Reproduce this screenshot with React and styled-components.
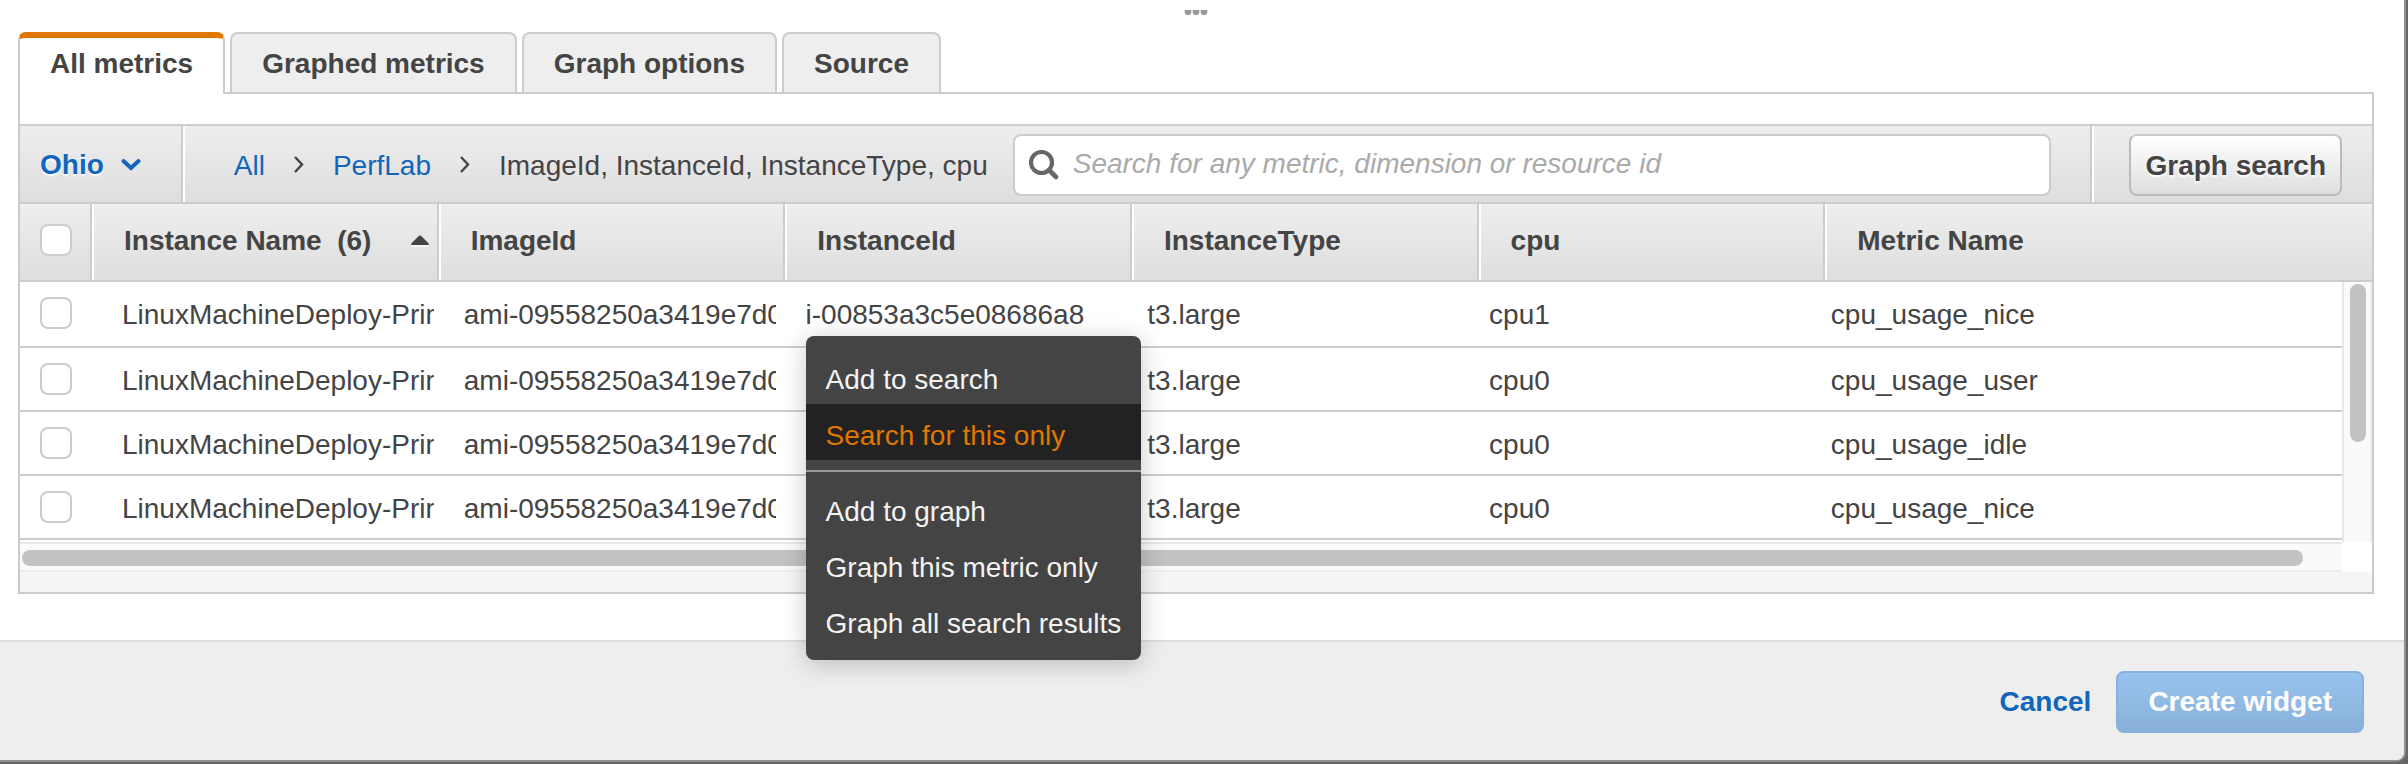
import React from "react";
import styled, { createGlobalStyle, css } from "styled-components";

const GlobalStyle = createGlobalStyle`
  * { box-sizing: border-box; }
  body {
    margin: 0;
    background: #6b6b6b;
    color: #444;
    font: 28px/32px "Liberation Sans", Arial, Helvetica, sans-serif;
  }
  button, input { font: inherit; color: inherit; }
`;

const raised = css`
  background: linear-gradient(#eeeeee, #dedede);
`;

const Backdrop = styled.div`
  padding: 0 4px 4px 0;
  background: #666;
`;

const Dialog = styled.div`
  display: flex;
  flex-direction: column;
  background: #fff;
  border-radius: 0 0 8px 0;
  box-shadow: 0 0 0 2px #909090;
`;

const DragHandle = styled.div`
  display: flex;
  justify-content: center;
  height: 32px;
  padding: 10px 12px 0 0;
`;

const Content = styled.main`
  padding: 0 30px 46px 18px;
`;

const TabBar = styled.div`
  display: flex;
  gap: 5px;
  padding-right: 2px;
`;

const Tab = styled.button`
  height: 60px;
  padding: 2px 30px 0;
  border: 2px solid #ccc;
  border-bottom: 0;
  border-radius: 8px 8px 0 0;
  background: #eee;
  font-weight: bold;
  ${(p) =>
    p.$active &&
    css`
      height: 62px;
      margin-bottom: -2px;
      padding-bottom: 4px;
      padding-top: 0;
      border-top: 6px solid #e07700;
      background: #fff;
      position: relative;
    `}
`;

const Panel = styled.section`
  padding-top: 30px;
  border: 2px solid #ccc;
`;

const Toolbar = styled.div`
  ${raised}
  display: flex;
  align-items: stretch;
  height: 80px;
  border: solid #ccc;
  border-width: 2px 0;
`;

const Region = styled.button`
  display: flex;
  align-items: center;
  gap: 17px;
  padding: 2px 40px 0 20px;
  border: 0;
  border-right: 2px solid #ccc;
  background: none;
  color: #1166bb;
  font-weight: bold;
  text-shadow: 0 2px 2px #fff;
`;

const Finder = styled.div`
  flex: 1;
  display: flex;
  align-items: center;
  gap: 25px;
  padding: 2px 39px 0 49px;
  border-left: 2px solid #fff;
`;

const Crumbs = styled.nav`
  display: flex;
  align-items: center;
  gap: 29px;
  padding-top: 2px;
  white-space: nowrap;
`;

const Crumb = styled.a`
  color: #1166bb;
  text-decoration: none;
`;

const SearchBox = styled.label`
  flex: 1;
  display: flex;
  align-items: center;
  gap: 14px;
  height: 62px;
  padding: 0 14px;
  border: 2px solid #ccc;
  border-radius: 8px;
  background: #fff;
`;

const SearchInput = styled.input`
  flex: 1;
  min-width: 0;
  padding: 0 0 2px;
  border: 0;
  outline: 0;
  background: none;
  &::placeholder { color: #aaa; opacity: 1; font-style: italic; }
`;

const SearchAction = styled.div`
  display: flex;
  align-items: center;
  padding: 2px 30px 0 37px;
  border-left: 2px solid #ccc;
  box-shadow: inset 2px 0 #fff;
`;

const GraphSearch = styled.button`
  height: 62px;
  padding: 2px 14px 0;
  border: 2px solid #bbb;
  border-top-color: #ccc;
  border-radius: 8px;
  background: linear-gradient(#fff, #dedede);
  font-weight: bold;
  text-shadow: 0 2px 2px #fff;
`;

const Table = styled.table`
  display: block;
  thead, tbody { display: block; }
`;

const HeadRow = styled.tr`
  ${raised}
  display: grid;
  grid-template-columns: 74px repeat(5, 7fr) 11fr;
  height: 78px;
  border-bottom: 2px solid #ccc;
`;

const HeadCell = styled.th`
  display: flex;
  align-items: center;
  justify-content: space-between;
  min-width: 0;
  padding: 0 12px 2px 30px;
  text-align: left;
  white-space: pre;
  box-shadow: inset -2px 0 #fff, inset -4px 0 #ccc;
  &:last-child { box-shadow: none; }
`;

const HeadCheck = styled.th`
  padding: 20px 20px 0;
  text-align: left;
  line-height: 0;
  box-shadow: inset -2px 0 #fff, inset -4px 0 #ccc;
`;

const Checkbox = styled.input.attrs({ type: "checkbox" })`
  appearance: none;
  width: 32px;
  height: 32px;
  margin: 0;
  border: 2px solid #ccc;
  border-radius: 8px;
  background: #fff;
`;

const Scroller = styled.div`
  display: grid;
  grid-template-columns: 1fr 30px;
  grid-template-rows: auto 30px;
`;

const Rows = styled(Table)`
  padding-bottom: 2px;
`;

const Row = styled.tr`
  display: grid;
  grid-template-columns: 72px repeat(5, 12fr) 19fr;
  height: 64px;
  border-bottom: 2px solid #ccc;
  &:first-child { height: 66px; }
`;

const CheckCell = styled.td`
  padding: 15px 20px 0;
  line-height: 0;
`;

const Cell = styled.td`
  position: relative;
  min-width: 0;
  padding: 17px 0 0 30px;
`;

const Value = styled.div`
  overflow: hidden;
  white-space: nowrap;
`;

const VerticalTrack = styled.div`
  padding: 2px 4px 0 6px;
  border: solid #eee;
  border-width: 0 2px;
  border-left-color: #e8e8e8;
  background: #fafafa;
`;

const VerticalThumb = styled.div`
  height: 158px;
  border-radius: 8px;
  background: #c2c2c2;
`;

const HorizontalTrack = styled.div`
  padding: 6px 0 4px 2px;
  border: solid #eee;
  border-width: 2px 0;
  border-top-color: #e8e8e8;
  background: #fafafa;
`;

const HorizontalThumb = styled.div`
  width: calc(100% - 39px);
  height: 16px;
  border-radius: 8px;
  background: #c2c2c2;
`;

const PanelFoot = styled.div`
  height: 20px;
  background: #f5f5f5;
`;

const Menu = styled.div`
  position: absolute;
  z-index: 2;
  top: 54px;
  left: 30px;
  padding: 12px 0;
  border-radius: 8px;
  background: #444;
  box-shadow: 0 4px 24px rgba(0, 0, 0, 0.22);
  white-space: nowrap;
`;

const MenuItem = styled.button`
  display: block;
  width: 100%;
  height: 56px;
  padding: 8px 20px 0;
  border: 0;
  background: ${(p) => (p.$active ? "#222" : "none")};
  color: ${(p) => (p.$active ? "#e07700" : "#f3f3f3")};
  text-align: left;
`;

const MenuRule = styled.hr`
  height: 2px;
  margin: 10px 0 8px;
  border: 0;
  background: #999;
`;

const Footer = styled.footer`
  display: flex;
  justify-content: flex-end;
  align-items: center;
  gap: 25px;
  height: 120px;
  padding: 2px 40px 0 0;
  border-top: 2px solid #ddd;
  border-radius: 0 0 8px 0;
  background: #eee;
  font-weight: bold;
`;

const Cancel = styled.button`
  padding: 0;
  border: 0;
  background: none;
  color: #1166bb;
  font-weight: bold;
`;

const Create = styled.button`
  height: 62px;
  padding: 0 30px;
  border: 2px solid #88b1de;
  border-radius: 8px;
  background: linear-gradient(#99c3ee, #88b0db);
  color: #fff;
  font-weight: bold;
`;

const ChevronDown = () => (
  <svg width="20" height="14" viewBox="0 0 20 14" fill="none" stroke="#1166bb" strokeWidth="4" strokeLinecap="round" aria-hidden="true">
    <path d="M2.5 3 10 10 17.5 3" />
  </svg>
);

const ChevronRight = () => (
  <svg width="10" height="20" viewBox="0 0 10 20" fill="none" stroke="#444" strokeWidth="2.4" aria-hidden="true">
    <path d="M1 1 8 8.500 1 16" />
  </svg>
);

const SearchIcon = () => (
  <svg width="30" height="30" viewBox="0 0 30 30" fill="none" stroke="#666" aria-hidden="true">
    <circle cx="12.5" cy="12.5" r="10.5" strokeWidth="4.2" />
    <path d="M20 20 27 27" strokeWidth="4.6" strokeLinecap="round" />
  </svg>
);

const SortUp = () => (
  <svg width="18" height="12" viewBox="0 0 18 12" aria-hidden="true">
    <path d="M0 12V10H18V12Z" fill="#f6f6f6" />
    <path d="M.5 10Q-.5 9 .8 8L8 .8Q9 0 10 .8L17.200 8Q18.500 9 17.500 10Z" fill="#444" />
  </svg>
);

const Grip = () => (
  <svg width="24" height="6" viewBox="0 0 24 6" aria-hidden="true">
    <path d="M0 0H24V3H0Z" fill="#ddd" />
    <path d="M1 0H7V3Q7 5 5 5H3Q1 5 1 3ZM9 0H15V3Q15 5 13 5H11Q9 5 9 3ZM17 0H23V3Q23 5 21 5H19Q17 5 17 3Z" fill="#999" />
  </svg>
);

const columns = ["ImageId", "InstanceId", "InstanceType", "cpu", "Metric Name"];

const metrics = [
  ["cpu1", "cpu_usage_nice"],
  ["cpu0", "cpu_usage_user"],
  ["cpu0", "cpu_usage_idle"],
  ["cpu0", "cpu_usage_nice"],
].map(([cpu, name]) => [
  "LinuxMachineDeploy-Primary",
  "ami-09558250a3419e7d0",
  "i-00853a3c5e08686a8",
  "t3.large",
  cpu,
  name,
]);

const ContextMenu = () => (
  <Menu role="menu">
    <MenuItem role="menuitem">Add to search</MenuItem>
    <MenuItem role="menuitem" $active>Search for this only</MenuItem>
    <MenuRule />
    <MenuItem role="menuitem">Add to graph</MenuItem>
    <MenuItem role="menuitem">Graph this metric only</MenuItem>
    <MenuItem role="menuitem">Graph all search results</MenuItem>
  </Menu>
);

export default function App() {
  return (
    <Backdrop>
      <GlobalStyle />
      <Dialog>
        <DragHandle><Grip /></DragHandle>
        <Content>
          <TabBar role="tablist">
            <Tab role="tab" aria-selected="true" $active>All metrics</Tab>
            <Tab role="tab">Graphed metrics</Tab>
            <Tab role="tab">Graph options</Tab>
            <Tab role="tab">Source</Tab>
          </TabBar>
          <Panel>
            <Toolbar>
              <Region>Ohio<ChevronDown /></Region>
              <Finder>
                <Crumbs>
                  <Crumb href="#all">All</Crumb>
                  <ChevronRight />
                  <Crumb href="#perflab">PerfLab</Crumb>
                  <ChevronRight />
                  <span>ImageId, InstanceId, InstanceType, cpu</span>
                </Crumbs>
                <SearchBox>
                  <SearchIcon />
                  <SearchInput
                    aria-label="Search metrics"
                    placeholder="Search for any metric, dimension or resource id"
                  />
                </SearchBox>
              </Finder>
              <SearchAction><GraphSearch>Graph search</GraphSearch></SearchAction>
            </Toolbar>
            <Table>
              <thead>
                <HeadRow>
                  <HeadCheck><Checkbox aria-label="Select all" /></HeadCheck>
                  <HeadCell>
                    <span>Instance Name{"  "}(6)</span>
                    <SortUp />
                  </HeadCell>
                  {columns.map((c) => <HeadCell key={c}>{c}</HeadCell>)}
                </HeadRow>
              </thead>
            </Table>
            <Scroller>
              <Rows>
                <tbody>
                  {metrics.map((cells, r) => (
                    <Row key={r}>
                      <CheckCell><Checkbox aria-label={`Select row ${r + 1}`} /></CheckCell>
                      {cells.map((text, c) => (
                        <Cell key={c}>
                          <Value>{text}</Value>
                          {r === 0 && c === 2 && <ContextMenu />}
                        </Cell>
                      ))}
                    </Row>
                  ))}
                </tbody>
              </Rows>
              <VerticalTrack><VerticalThumb /></VerticalTrack>
              <HorizontalTrack><HorizontalThumb /></HorizontalTrack>
            </Scroller>
            <PanelFoot />
          </Panel>
        </Content>
        <Footer>
          <Cancel>Cancel</Cancel>
          <Create>Create widget</Create>
        </Footer>
      </Dialog>
    </Backdrop>
  );
}
